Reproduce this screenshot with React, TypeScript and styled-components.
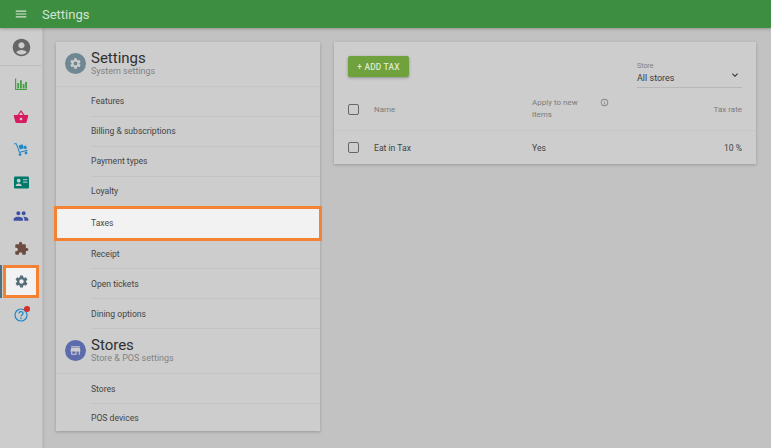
import React from 'react';
import styled, { createGlobalStyle } from 'styled-components';
import {
  MdAccountCircle, MdShoppingBasket, MdPeople, MdExtension, MdSettings, MdMenu, MdStore,
  MdKeyboardArrowDown, MdInfoOutline,
} from 'react-icons/md';

const Global = createGlobalStyle`
  html, body { margin: 0; padding: 0; background: #c2c2c2; }
  * { box-sizing: border-box; }
  body { font-family: Roboto, "Liberation Sans", sans-serif; }
`;

const Page = styled.div`
  width: 771px; height: 448px; display: flex; flex-direction: column; overflow: hidden;
  background: #c2c2c2;
`;
const TopBar = styled.header`
  height: 28px; flex: none; background: #3d8e40; display: flex; align-items: center;
  padding-left: 14px; gap: 14px; color: #d3e4d4; font-size: 13px;
  box-shadow: 0 1px 3px rgba(0,0,0,.25); position: relative; z-index: 2;
`;
const Body = styled.div`flex: 1; display: flex; min-height: 0;`;
const Rail = styled.nav`
  width: 43px; flex: none; background: #cdcdcd; border-right: 1px solid #bdbdbd;
  display: flex; flex-direction: column; align-items: stretch;
  box-shadow: 1px 0 2px rgba(0,0,0,.08);
`;
const AccountSlot = styled.div`
  height: 38px; flex: none; display: flex; align-items: center; justify-content: center;
  border-bottom: 1px solid #bfbfbf; color: #666; padding-top: 1px; margin-bottom: 1px;
`;
const RailItem = styled.div<{ $active?: boolean; $color: string }>`
  height: 33px; flex: none; display: flex; align-items: center; justify-content: center;
  color: ${p => p.$color}; position: relative;
  ${p => p.$active ? `
    background: #f2f2f2;
    margin: 0 3px 0 3px;
    outline: 3px solid #f58233;
    outline-offset: -3px;
    &::before {
      content: ''; position: absolute; left: -3px; top: 0; bottom: 0; width: 2px; background: #546e7a;
    }
  ` : ''}
`;
const Badge = styled.span`
  position: absolute; width: 6px; height: 6px; border-radius: 50%; background: #d32f2f;
  left: 24px; top: 8px;
`;
const Main = styled.main`
  flex: 1; display: flex; align-items: flex-start; gap: 14px; padding: 14px 15px 0 13px;
`;
const Card = styled.section`
  background: #cdcdcd; box-shadow: 0 1px 3px rgba(0,0,0,.22);
`;
const MenuCard = styled(Card)`width: 264px; flex: none; height: 389px;`;
const TaxCard = styled(Card)`flex: 1; height: 122px; display: flex; flex-direction: column;`;
const SectionHead = styled.div`
  height: 45px; display: flex; align-items: center; gap: 5px; padding-left: 9px;
  border-bottom: 1px solid #c4c4c4; padding-bottom: 1px;
`;
const Avatar = styled.div<{ $bg: string }>`
  width: 21px; height: 21px; border-radius: 50%; background: ${p => p.$bg}; color: #cdcdcd;
  display: flex; align-items: center; justify-content: center; flex: none;
`;
const HeadText = styled.div`display: flex; flex-direction: column;`;
const HeadTitle = styled.div`font-size: 15px; line-height: 16px; color: #303030;`;
const HeadSub = styled.div`font-size: 9px; line-height: 11px; color: #838383;`;
const MenuRow = styled.div<{ $active?: boolean; $last?: boolean }>`
  height: 29.875px; display: flex; align-items: center; margin-left: 35px;
  font-size: 8.6px; color: #444;
  border-bottom: 1px solid ${p => p.$last ? 'transparent' : '#c4c4c4'};
  ${p => p.$active ? `
    margin-left: 0; padding-left: 35px; background: #f2f2f2; position: relative;
    border-bottom: none; color: #4a4a4a;
    outline: 3px solid #f58233; outline-offset: 0; height: 29px; margin: 2px 1px 2px 1px; padding-left: 34px;
    margin-bottom: 2px;
  ` : ''}
`;
const Toolbar = styled.div`
  height: 46px; flex: none; display: flex; justify-content: space-between; padding: 14px 14px 0;
`;
const AddButton = styled.button`
  width: 61px; height: 21px; border: 0; border-radius: 2px; background: #6fa23c; color: #dce8cf;
  font: 500 8.4px Roboto, sans-serif; letter-spacing: .2px; padding: 0;
  box-shadow: 0 1px 3px rgba(0,0,0,.3);
`;
const StoreField = styled.div`
  width: 105px; margin-top: 5px; height: 27px; border-bottom: 1px solid #b8b8b8; position: relative;
`;
const StoreLabel = styled.div`font-size: 7px; line-height: 9px; color: #808080; margin-top: 1px;`;
const StoreValue = styled.div`font-size: 9px; line-height: 13px; color: #3c3c3c; margin-top: 1px;`;
const Chevron = styled.span`position: absolute; right: 1px; top: 8px; color: #333; display: flex;`;
const TableRow = styled.div<{ $head?: boolean }>`
  display: grid; grid-template-columns: 26px 158px 68px 1fr; align-items: center;
  padding: 0 14px; height: ${p => p.$head ? '43px' : '33px'};
  ${p => p.$head ? 'border-bottom: 1px solid #c6c6c6;' : ''}
  font-size: ${p => p.$head ? '8px' : '8.6px'};
  color: ${p => p.$head ? '#7c7c7c' : '#444'};
`;
const Check = styled.span`
  width: 11px; height: 11px; border: 1.3px solid #666; border-radius: 2px; display: block;
`;
const ApplyCell = styled.div`line-height: 12px; width: 60px;`;
const InfoCell = styled.div`display: flex; color: #777; margin-top: -7px; margin-left: 0;`;
const NumCell = styled.div`text-align: right;`;

const ChartIcon = () => (
  <svg width="14" height="14" viewBox="0 0 14 14" fill="currentColor">
    <path d="M1 1.5h1.2V12H13v1H1zM3.3 6h1.8v5.6H3.3zM6 3.2h1.8v8.4H6zM8.7 7h1.8v4.6H8.7zM11.2 5h1.8v6.6h-1.8z" />
  </svg>
);
const CartIcon = () => (
  <svg width="15" height="15" viewBox="0 0 15 15" fill="currentColor">
    <path d="M0 1.2h2.6l3.2 8.6 7.6-2 .3 1-8.5 2.3L1.9 2.2H0z" />
    <path d="M4.6 3.4l4-1.2 1.3 4-4 1.2zM9.6 4.3l2.4-.7.9 3-2.4.7z" />
    <circle cx="6" cy="12.6" r="1.4" /><circle cx="12" cy="11" r="1.4" />
  </svg>
);
const CardIcon = () => (
  <svg width="15" height="13" viewBox="0 0 15 13">
    <rect y=".5" width="15" height="12" rx="1.2" fill="currentColor" />
    <circle cx="4.7" cy="4.7" r="1.9" fill="#cdcdcd" />
    <path d="M1.6 10c0-1.8 1.6-2.6 3.1-2.6S7.8 8.2 7.8 10z" fill="#cdcdcd" />
    <rect x="9" y="3" width="4.4" height="1.3" fill="#cdcdcd" opacity=".75" />
    <rect x="9" y="5.6" width="4.4" height="1.3" fill="#cdcdcd" opacity=".75" />
  </svg>
);
const HelpIcon = () => (
  <svg width="14" height="14" viewBox="0 0 14 14" fill="none" stroke="currentColor">
    <circle cx="7" cy="7" r="6" strokeWidth="1.2" />
    <path d="M5 5.5C5 4.3 6 3.7 7 3.7s2 .7 2 1.8C9 7 7 7 7 8.6" strokeWidth="1.2" />
    <circle cx="7" cy="10.4" r=".8" fill="currentColor" stroke="none" />
  </svg>
);

const settings = ['Features', 'Billing & subscriptions', 'Payment types', 'Loyalty', 'Taxes', 'Receipt', 'Open tickets', 'Dining options'];

export default function App() {
  return (
    <Page>
      <Global />
      <TopBar><MdMenu size={14} color="#d3e4d4" />Settings</TopBar>
      <Body>
        <Rail>
          <AccountSlot><MdAccountCircle size={21} /></AccountSlot>
          <RailItem $color="#43a047"><ChartIcon /></RailItem>
          <RailItem $color="#d81b60"><MdShoppingBasket size={16} /></RailItem>
          <RailItem $color="#1e88c7"><CartIcon /></RailItem>
          <RailItem $color="#00796b"><CardIcon /></RailItem>
          <RailItem $color="#3f51a5"><MdPeople size={16} /></RailItem>
          <RailItem $color="#6d4c41"><MdExtension size={15} /></RailItem>
          <RailItem $color="#546e7a" $active><MdSettings size={15} /></RailItem>
          <RailItem $color="#1e88c7"><HelpIcon /><Badge /></RailItem>
        </Rail>
        <Main>
          <MenuCard>
            <SectionHead>
              <Avatar $bg="#6f8793"><MdSettings size={13} /></Avatar>
              <HeadText><HeadTitle>Settings</HeadTitle><HeadSub>System settings</HeadSub></HeadText>
            </SectionHead>
            {settings.map((s) => (
              <MenuRow key={s} $active={s === 'Taxes'}>{s}</MenuRow>
            ))}
            <SectionHead>
              <Avatar $bg="#5c6bab"><MdStore size={13} /></Avatar>
              <HeadText><HeadTitle>Stores</HeadTitle><HeadSub>Store &amp; POS settings</HeadSub></HeadText>
            </SectionHead>
            <MenuRow>Stores</MenuRow>
            <MenuRow $last>POS devices</MenuRow>
          </MenuCard>
          <TaxCard>
            <Toolbar>
              <AddButton>+ ADD TAX</AddButton>
              <StoreField>
                <StoreLabel>Store</StoreLabel>
                <StoreValue>All stores</StoreValue>
                <Chevron><MdKeyboardArrowDown size={12} /></Chevron>
              </StoreField>
            </Toolbar>
            <TableRow $head>
              <Check /><div>Name</div>
              <ApplyCell>Apply to new items</ApplyCell>
              <div style={{ display: 'flex', justifyContent: 'space-between' }}>
                <InfoCell><MdInfoOutline size={9} /></InfoCell>
                <NumCell>Tax rate</NumCell>
              </div>
            </TableRow>
            <TableRow>
              <Check /><div>Eat in Tax</div>
              <div>Yes</div>
              <NumCell>10 %</NumCell>
            </TableRow>
          </TaxCard>
        </Main>
      </Body>
    </Page>
  );
}
